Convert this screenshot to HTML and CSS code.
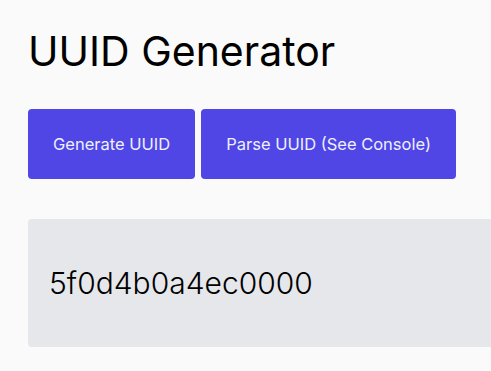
FILE: index.html
```html
<!DOCTYPE html>
<html lang="en">
<head>
<meta charset="utf-8">
<title>UUID Generator</title>
<link rel="stylesheet" href="styles.css">
</head>
<body>
<main class="app">
  <h1 class="title">UUID Generator</h1>
  <div class="actions">
    <button class="btn">Generate UUID</button>
    <button class="btn">Parse UUID (See Console)</button>
  </div>
  <div class="output">5f0d4b0a4ec0000</div>
</main>
</body>
</html>
```

FILE: styles.css
```css
html, body {
  margin: 0;
  padding: 0;
  overflow: hidden;
}
body {
  background: #fafafa;
  font-family: Inter, "Noto Sans", sans-serif;
  color: #000;
}
.app {
  padding: 21px 28px;
}
.title {
  margin: 0 0 28px;
  font-size: 41px;
  font-weight: 400;
  line-height: 60px;
}
.actions {
  display: flex;
  gap: 6px;
}
.btn {
  height: 70px;
  padding: 0 25px;
  border: none;
  border-radius: 4px;
  background: #4f46e5;
  color: #eef0ff;
  font-family: Inter, "Noto Sans", sans-serif;
  font-size: 16.5px;
  font-weight: 400;
}
.output {
  margin-top: 40px;
  width: 600px;
  height: 128px;
  box-sizing: border-box;
  padding: 0 21px;
  display: flex;
  align-items: center;
  background: #e5e7eb;
  border-radius: 4px;
  font-size: 30px;
  font-weight: 300;
}
```
